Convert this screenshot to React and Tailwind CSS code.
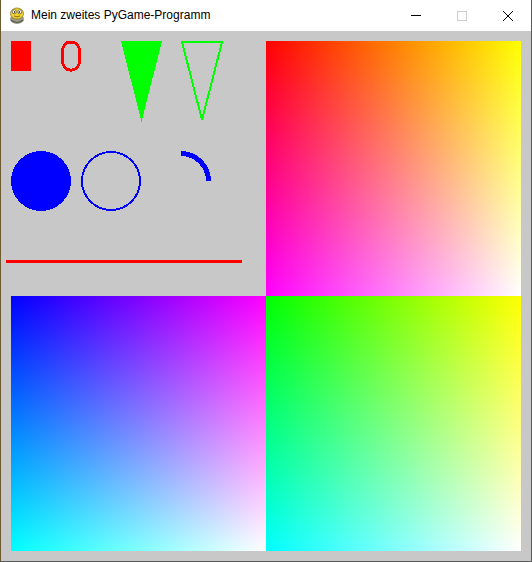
export default function App() {
  return (
    <div className="w-[532px] h-[562px] flex flex-col bg-white border-l border-l-[#6b5a30] border-r border-r-[#5a5a5a] border-b border-b-[#5a5a5a]">
      {/* Title bar */}
      <div className="h-[31px] flex items-center bg-white">
        <div className="w-[30px] flex justify-center pl-[2px]">
          <svg width="16" height="18" viewBox="0 0 16 18">
            <ellipse cx="8" cy="12" rx="7" ry="5" fill="#9a9a8a" />
            <path d="M2 13 Q8 18 14 13" stroke="#5b5b4a" strokeWidth="1.2" fill="none" />
            <ellipse cx="8" cy="6.5" rx="6.5" ry="5.5" fill="#f2d22e" stroke="#8a7a20" strokeWidth="0.8" />
            <circle cx="5.3" cy="4.8" r="2" fill="#fff" stroke="#333" strokeWidth="0.6" />
            <circle cx="10.7" cy="4.8" r="2" fill="#fff" stroke="#333" strokeWidth="0.6" />
            <circle cx="5.6" cy="5" r="0.8" fill="#000" />
            <circle cx="10.4" cy="5" r="0.8" fill="#000" />
            <path d="M5 9 Q8 10.5 11 9" stroke="#6b5a10" strokeWidth="0.8" fill="none" />
          </svg>
        </div>
        <span className="text-[12px] leading-none text-black font-['Liberation_Sans',Arial,sans-serif] -mt-[1px]">
          Mein zweites PyGame-Programm
        </span>
        <div className="ml-auto flex h-full">
          <div className="w-[46px] h-full flex items-center justify-center">
            <div className="w-[10px] h-px bg-black" />
          </div>
          <div className="w-[46px] h-full flex items-center justify-center">
            <div className="w-[10px] h-[10px] border border-[#cccccc]" />
          </div>
          <div className="w-[46px] h-full flex items-center justify-center">
            <svg width="10" height="10" viewBox="0 0 10 10">
              <path d="M0 0 L10 10 M10 0 L0 10" stroke="#000" strokeWidth="1" />
            </svg>
          </div>
        </div>
      </div>
      {/* Canvas */}
      <div className="w-[530px] h-[530px] bg-[#c8c8c8] p-[10px]">
        <div className="grid grid-cols-[255px_255px] grid-rows-[255px_255px]">
          <svg width="255" height="255" viewBox="10 10 255 255" overflow="visible" shapeRendering="crispEdges">
            <rect x="10" y="10" width="20" height="30" fill="#ff0000" />
            <rect x="61.5" y="11" width="17" height="28" rx="8" ry="9" fill="none" stroke="#ff0000" strokeWidth="3" />
            <polygon points="120,10 161,10 140.5,91" fill="#00ff00" />
            <polygon points="181,11 221,11 201,89" fill="none" stroke="#00ff00" strokeWidth="2" />
            <circle cx="40" cy="150" r="30" fill="#0000ff" />
            <circle cx="110" cy="150" r="29" fill="none" stroke="#0000ff" strokeWidth="2" />
            <path d="M180 122.5 A27.5 27.5 0 0 1 207.5 150" fill="none" stroke="#0000ff" strokeWidth="5" />
            <rect x="5" y="229" width="236" height="3" fill="#ff0000" />
          </svg>
          <div className="bg-[#ff0000] bg-[linear-gradient(to_right,#000,#0f0),linear-gradient(to_bottom,#000,#00f)] bg-blend-screen" />
          <div className="bg-[#0000ff] bg-[linear-gradient(to_right,#000,#f00),linear-gradient(to_bottom,#000,#0f0)] bg-blend-screen" />
          <div className="bg-[#00ff00] bg-[linear-gradient(to_right,#000,#f00),linear-gradient(to_bottom,#000,#00f)] bg-blend-screen" />
        </div>
      </div>
    </div>
  );
}
